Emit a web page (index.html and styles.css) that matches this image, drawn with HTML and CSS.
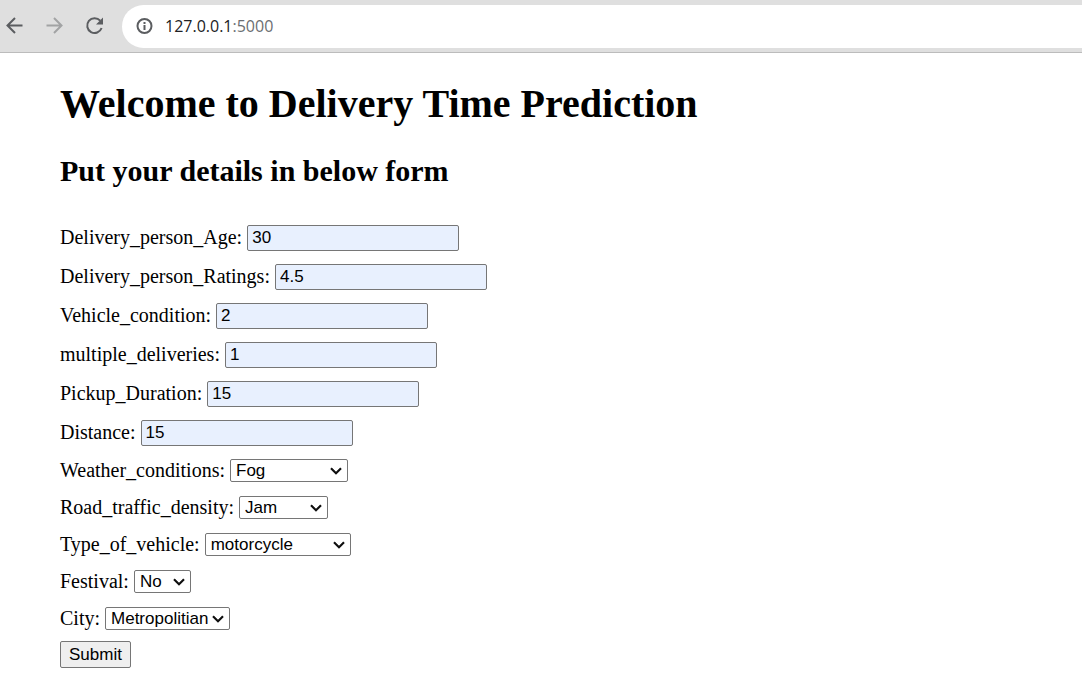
FILE: index.html
```html
<!DOCTYPE html>
<html lang="en">
<head>
<meta charset="utf-8">
<title>Delivery Time Prediction</title>
<link rel="stylesheet" href="styles.css">
</head>
<body>
<header class="toolbar">
  <nav class="nav-buttons" aria-label="Browser navigation">
    <button class="icon-button" type="button" aria-label="Back">
      <svg width="20" height="20" viewBox="0 0 20 20" fill="none" stroke="#5b5d60" stroke-width="2"><path d="M18.500 9.500H3.500M11 2L3.500 9.500 11 17"/></svg>
    </button>
    <button class="icon-button" type="button" aria-label="Forward" disabled>
      <svg width="20" height="20" viewBox="0 0 20 20" fill="none" stroke="#a2a3a4" stroke-width="2"><path d="M2.500 9.500h15M10 2l7.500 7.500L10 17"/></svg>
    </button>
    <button class="icon-button" type="button" aria-label="Reload">
      <svg width="20" height="20" viewBox="0 0 20 20" fill="none" stroke="#5b5d60" stroke-width="2"><path d="M16.200 4.700A7.400 7.400 0 1 0 17.600 12"/><path d="M19 1.500v7h-7z" fill="#5b5d60" stroke="none"/></svg>
    </button>
  </nav>
  <div class="address">
    <svg width="18" height="18" viewBox="0 0 18 18" fill="none" stroke="#5b5d60" stroke-width="2"><circle cx="9.500" cy="9" r="7"/><path d="M9.500 8v5M9.500 5v2"/></svg>
    <span class="url">127.0.0.1<span class="port">:5000</span></span>
  </div>
</header>
<main class="page">
  <h1 class="title">Welcome to Delivery Time Prediction</h1>
  <h2 class="subtitle">Put your details in below form</h2>
  <form class="form">
    <div class="row"><label class="label" for="age">Delivery_person_Age:</label><input class="text" id="age" type="text" value="30"></div>
    <div class="row"><label class="label" for="ratings">Delivery_person_Ratings:</label><input class="text" id="ratings" type="text" value="4.5"></div>
    <div class="row"><label class="label" for="condition">Vehicle_condition:</label><input class="text" id="condition" type="text" value="2"></div>
    <div class="row"><label class="label" for="multiple">multiple_deliveries:</label><input class="text" id="multiple" type="text" value="1"></div>
    <div class="row"><label class="label" for="pickup">Pickup_Duration:</label><input class="text" id="pickup" type="text" value="15"></div>
    <div class="row"><label class="label" for="distance">Distance:</label><input class="text" id="distance" type="text" value="15"></div>
    <div class="row row-select"><label class="label" for="weather">Weather_conditions:</label><select class="select weather" id="weather"><option>Fog</option></select></div>
    <div class="row row-select"><label class="label" for="traffic">Road_traffic_density:</label><select class="select traffic" id="traffic"><option>Jam</option></select></div>
    <div class="row row-select"><label class="label" for="vehicle">Type_of_vehicle:</label><select class="select vehicle" id="vehicle"><option>motorcycle</option></select></div>
    <div class="row row-select"><label class="label" for="festival">Festival:</label><select class="select festival" id="festival"><option>No</option></select></div>
    <div class="row row-select"><label class="label" for="city">City:</label><select class="select city" id="city"><option>Metropolitian</option></select></div>
    <button class="submit" type="submit">Submit</button>
  </form>
</main>
</body>
</html>
```
FILE: styles.css
```css
* { box-sizing: border-box; }
body {
  margin: 0;
  background: #fff;
  color: #000;
  font: 20px/24px "Liberation Serif", "Times New Roman", serif;
}
.toolbar {
  display: flex;
  align-items: center;
  height: 53px;
  background: #dfdfdf;
  border-bottom: 1px solid #bcbcbc;
}
.nav-buttons {
  display: flex;
  gap: 20px;
  padding: 0 18px 0 4px;
}
.icon-button {
  display: flex;
  padding: 0;
  border: 0;
  background: none;
}
.address {
  flex: 1;
  display: flex;
  align-items: center;
  gap: 12px;
  height: 43px;
  padding-left: 13px;
  background: #fff;
  border-radius: 22px 0 0 22px;
}
.url {
  font: 16px/24px "Open Sans", "Noto Sans", sans-serif;
  color: #202124;
}
.port { color: #6b6e72; }
.page { padding: 28px 60px 14px; }
.title {
  margin: 0 0 24px;
  font-size: 40px;
  line-height: 46px;
}
.subtitle {
  margin: 0 0 27px;
  font-size: 30px;
  line-height: 40px;
}
.row {
  display: flex;
  align-items: center;
  gap: 5px;
  height: 39px;
}
.row-select { height: 37px; }
.label { padding-bottom: 2px; }
.text, .select, .submit {
  font: 17px/20px "Liberation Sans", Arial, sans-serif;
  color: #000;
  border: 1px solid #767676;
  border-radius: 2px;
}
.text {
  width: 212px;
  height: 26px;
  padding: 0 4px;
  background: #e8f0fe;
}
.select {
  appearance: none;
  height: 23px;
  padding: 0 0 0 5px;
  background: #fff url("data:image/svg+xml,%3Csvg xmlns='http://www.w3.org/2000/svg' width='12' height='8' fill='none' stroke='%23111' stroke-width='2.2'%3E%3Cpath d='M1 1.200L6 6.200 11 1.200'/%3E%3C/svg%3E") no-repeat right 5px center;
}
.weather { width: 118px; }
.traffic { width: 89px; }
.vehicle { width: 146px; }
.festival { width: 57px; }
.city { width: 125px; }
.submit {
  display: block;
  height: 27px;
  margin-top: 4px;
  padding: 0 8px;
  background: #efefef;
}
```
